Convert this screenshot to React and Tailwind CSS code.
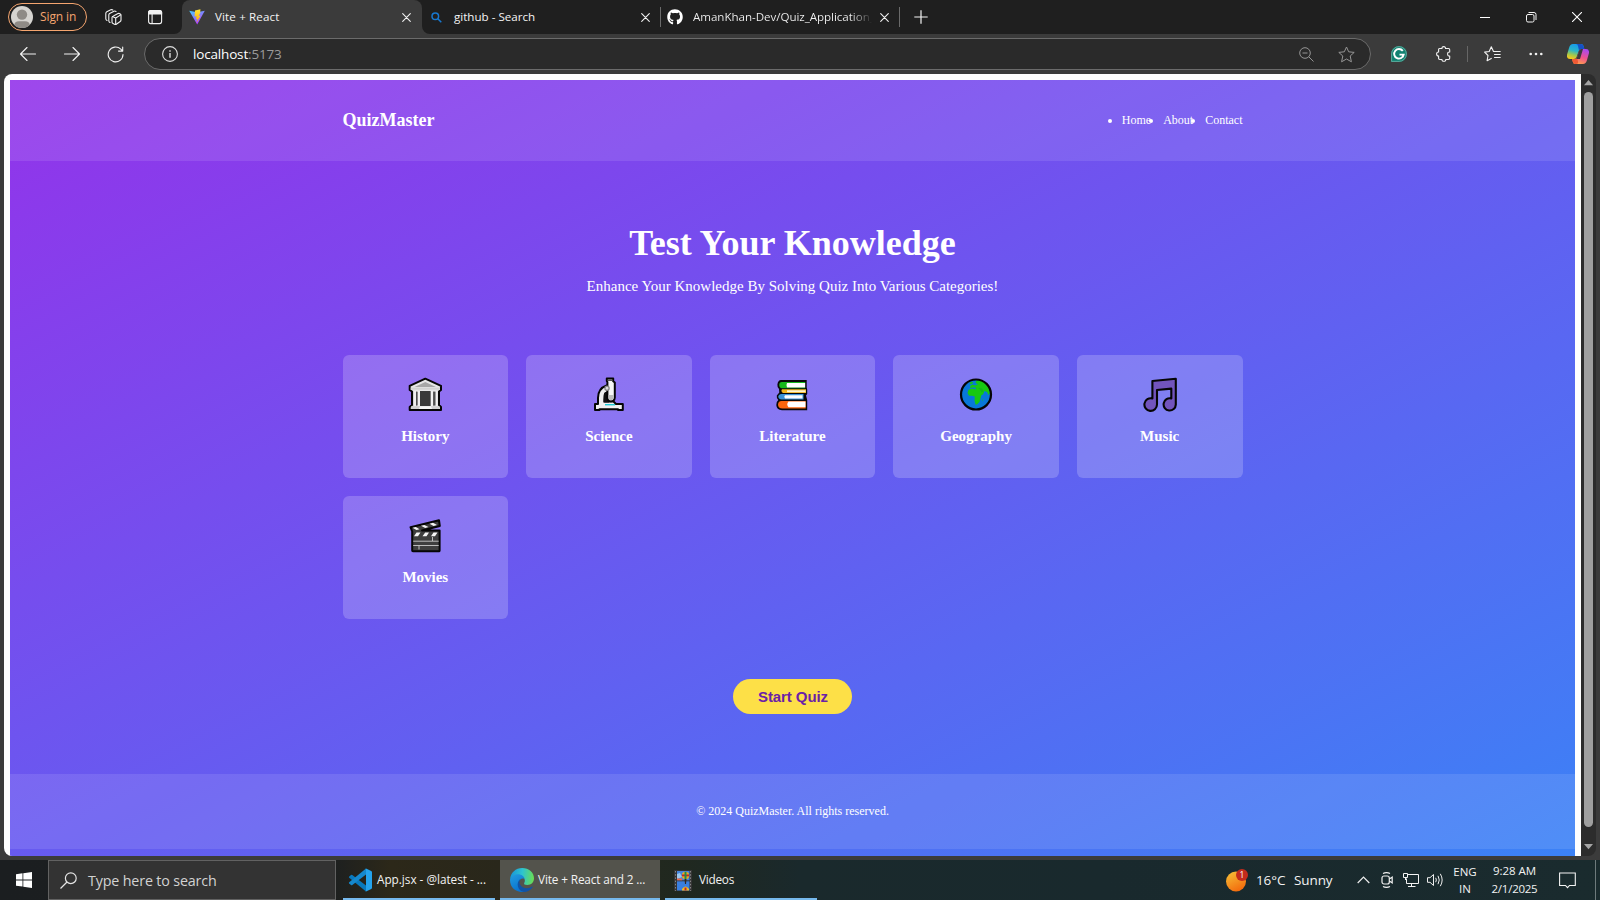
import React from "react";
import { FaGithub } from "react-icons/fa";

const ICON = { fill: "none", stroke: "#f2f2f2", strokeWidth: 1.1, strokeLinecap: "round", strokeLinejoin: "round" };

function CloseX({ className = "" }) {
  return (
    <svg width="9" height="9" viewBox="0 0 9 9" className={"shrink-0 " + className} {...ICON}>
      <path d="M.7 .7 8.3 8.3M8.3 .7 .7 8.3" />
    </svg>
  );
}

function ViteLogo() {
  return (
    <svg width="16" height="16" viewBox="0 0 16 16" className="ml-[7px] shrink-0">
      <defs>
        <linearGradient id="va" x1="0" y1="0" x2=".6" y2="1">
          <stop offset="0" stopColor="#41d1ff" />
          <stop offset="1" stopColor="#bd34fe" />
        </linearGradient>
        <linearGradient id="vb" x1="0" y1="0" x2="0" y2="1">
          <stop offset="0" stopColor="#ffe83a" />
          <stop offset="1" stopColor="#ffa800" />
        </linearGradient>
      </defs>
      <path d="M.2 1.8 8 3.2 15.8 1.8 8.2 15.6Z" fill="url(#va)" />
      <path d="M11.4.3 6 1.4 5.6 7.6 7.6 7.2 7 10.2 8.4 9.8 7.6 13.4 11.6 6.6 9.6 7 11.2 4Z" fill="url(#vb)" />
    </svg>
  );
}

function TabStrip() {
  return (
    <div className="flex h-[34px] shrink-0 items-center bg-[#1f1f1f] text-[11.6px] text-[#f3f3f3]">
      <div className="ml-2 flex h-[28px] w-[79px] shrink-0 items-center rounded-full border border-[#f5a56f] pl-[2px]">
        <svg width="22" height="22" viewBox="0 0 22 22" className="shrink-0">
          <defs><clipPath id="av"><circle cx="11" cy="11" r="11" /></clipPath></defs>
          <g clipPath="url(#av)">
            <rect width="22" height="22" fill="#d6d4d0" />
            <circle cx="11" cy="8.6" r="5.2" fill="#8f8b86" />
            <path d="M3 22v-2.5Q3.500 15.200 8 15.200H14Q18.500 15.200 19 19.500V22Z" fill="#8f8b86" />
          </g>
        </svg>
        <span className="ml-[7px] whitespace-nowrap text-[12px] tracking-[-0.1px] text-[#f5a56f]">Sign in</span>
      </div>
      <svg width="17" height="17" viewBox="0 0 17 17" className="ml-[18px] shrink-0" {...ICON}>
        <path d="M9.300 6.600 13 4.600Q14 4.200 14.800 4.700L15.500 5.200Q16 5.700 16 6.500V11Q16 12 15.200 12.500L11.300 15.200Q10.500 15.800 9.500 15.300L8 14.500Q7 14 7 13V8.500Q7 7.500 8 7.200Z" />
        <path d="M7.500 7.500 10.700 9V15.300M10.700 9 15.700 5.900M5 13.500 4.300 13Q3.800 12.500 3.800 11.500V6Q3.800 5 4.600 4.500L9 2.200Q10 1.800 11 2.500M2 11.500Q.8 11 .8 9.800V4.500Q.8 3.300 1.800 2.800L5.800.800Q6.800.400 7.800.900" />
      </svg>
      <svg width="16" height="16" viewBox="0 0 16 16" className="ml-[25px] shrink-0" {...ICON}>
        <rect x="1.600" y="1.600" width="13" height="13" rx="2" />
        <path d="M1.600 3.600Q1.600 1.600 3.600 1.600H12.600Q14.600 1.600 14.600 3.600V5H1.600Z" fill="#f2f2f2" />
        <path d="M5.100 5V14.500" />
      </svg>
      <div className="ml-[11px] h-2 w-2 shrink-0 self-end bg-[#3b3b3b]"><div className="h-2 w-2 rounded-br-lg bg-[#1f1f1f]" /></div>
      <div className="flex h-[34px] w-[240px] shrink-0 items-center rounded-t-lg bg-[#3b3b3b]">
        <ViteLogo />
        <span className="ml-[10px] w-[187px] whitespace-nowrap tracking-[0.13px]">Vite + React</span>
        <CloseX />
      </div>
      <div className="h-2 w-2 shrink-0 self-end bg-[#3b3b3b]"><div className="h-2 w-2 rounded-bl-lg bg-[#1f1f1f]" /></div>
      <svg width="11" height="11" viewBox="0 0 11 11" className="ml-[1px] shrink-0" fill="none" stroke="#1778d0" strokeWidth="1.500">
        <circle cx="4.300" cy="4.300" r="3.300" /><path d="M6.800 6.800 10.300 10.300" />
      </svg>
      <span className="ml-[12px] w-[187px] shrink-0 whitespace-nowrap">github - Search</span>
      <CloseX />
      <div className="ml-[10px] h-5 w-px shrink-0 bg-[#6a6a6a]" />
      <FaGithub size={16} color="#fff" className="ml-[6px] shrink-0" />
      <span className="ml-[10px] w-[181px] shrink-0 whitespace-nowrap bg-[linear-gradient(to_right,#f3f3f3_87%,#1f1f1f_99%)] bg-clip-text tracking-[-0.05px] text-transparent">AmanKhan-Dev/Quiz_Application_</span>
      <CloseX className="ml-[6px]" />
      <div className="ml-[10px] h-5 w-px shrink-0 bg-[#6a6a6a]" />
      <svg width="14" height="14" viewBox="0 0 14 14" className="ml-[14px] shrink-0" fill="none" stroke="#f5f5f5" strokeWidth="1.200"><path d="M7 .3V13.700M.3 7H13.700" /></svg>
      <svg width="10" height="10" viewBox="0 0 10 10" className="ml-auto shrink-0" fill="none" stroke="#fff"><path d="M0 5.500H10" /></svg>
      <svg width="10" height="10" viewBox="0 0 10 10" className="ml-[36px] shrink-0 overflow-visible" fill="none" stroke="#f5f5f5">
        <rect x=".5" y="2.500" width="7.500" height="7.500" rx="1.500" /><path d="M2.500.5H8Q10 .5 10 2.500V8" />
      </svg>
      <svg width="10" height="10" viewBox="0 0 10 10" className="ml-[36px] mr-[18px] shrink-0" fill="none" stroke="#fff" strokeWidth="1.100"><path d="M0 0 10 10M10 0 0 10" /></svg>
    </div>
  );
}

function Toolbar() {
  return (
    <div className="flex h-10 shrink-0 items-center bg-[#3b3b3b]">
      <svg width="16" height="14" viewBox="0 0 16 14" className="ml-[20px] shrink-0" {...ICON}><path d="M.5 7H15.500M7 .500.500 7 7 13.500" /></svg>
      <svg width="16" height="14" viewBox="0 0 16 14" className="ml-[28px] shrink-0" {...ICON}><path d="M.5 7H15.500M9 .5 15.500 7 9 13.500" /></svg>
      <svg width="17" height="17" viewBox="0 0 17 17" className="ml-[27px] shrink-0" {...ICON}><path d="M16 8.500A7.400 7.400 0 1 1 13.800 3.200L15.700 5.100M15.700 1V5.100H11.500" /></svg>
      <div className="ml-[20px] flex h-[32px] w-[1227px] shrink-0 items-center rounded-full border border-[#6b6b6b] bg-[#2a2a2a]">
        <svg width="16" height="16" viewBox="0 0 16 16" className="ml-[17px] shrink-0" fill="none" stroke="#dedede" strokeWidth="1.100"><circle cx="8" cy="8" r="7.400" /><path d="M8 7V11.700" strokeWidth="1.400" /><path d="M8 4.300V5.700" strokeWidth="1.400" /></svg>
        <span className="ml-[15px] whitespace-nowrap text-[13.500px] tracking-[-0.17px] text-white">localhost<span className="text-[#9a9a9a]">:5173</span></span>
        <svg width="15" height="15" viewBox="0 0 15 15" className="ml-auto shrink-0" fill="none" stroke="#959595"><circle cx="6" cy="6" r="5.300" /><path d="M9.800 9.800 14.500 14.500M3.500 6H8.500" /></svg>
        <svg width="17" height="17" viewBox="0 0 17 17" className="ml-[24px] mr-[15px] shrink-0" fill="none" stroke="#959595" strokeLinejoin="round"><path d="M8.500 1 10.700 5.800 16.200 6.400 12.200 10 13.400 15.800 8.500 13 3.600 15.800 4.800 10 .8 6.400 6.300 5.800Z" /></svg>
      </div>
      <svg width="16" height="16" viewBox="0 0 16 16" className="ml-[20px] shrink-0" fill="none">
        <path d="M8 0A8 8 0 1 1 8 16H0V8A8 8 0 0 1 8 0Z" fill="#128271" />
        <path d="M.6 15.400V8A7.400 7.400 0 1 1 8 15.400Z" stroke="#7fb9ad" strokeWidth=".7" />
        <path d="M11.800 4.900A4.800 4.800 0 1 0 12.700 8.600H8.500M12.500 8.600 11.500 11.400" stroke="#fff" strokeWidth="1.900" />
      </svg>
      <svg width="16" height="16" viewBox="0 0 16 16" className="ml-[29px] shrink-0" {...ICON}><path d="M3.500 2.500H6Q5.800.600 7.700.600T9.500 2.500H12.500Q13.700 2.500 13.700 3.700V6Q11.600 5.900 11.600 8T13.700 10V12.300Q13.700 13.500 12.500 13.500H9.700Q9.900 15.300 7.900 15.300T6 13.500H3.800Q2.600 13.500 2.600 12.300V10Q.6 10 .6 8T2.600 6V3.700Q2.600 2.500 3.500 2.500Z" /></svg>
      <div className="ml-[15px] h-4 w-px shrink-0 bg-[#666]" />
      <svg width="17" height="16" viewBox="0 0 17 16" className="ml-[16px] shrink-0" {...ICON}><path d="M9.500 5.500 7.300.800 5.200 5.500.600 6.100 4 9.500 3.100 14.700 7.300 12.400M10.500 8.500H16.200M10.500 11.500H16.200M9.500 5.500H16.200" /></svg>
      <svg width="14" height="4" viewBox="0 0 14 4" className="ml-[28px] shrink-0" fill="#f2f2f2"><circle cx="1.700" cy="2" r="1.300" /><circle cx="7" cy="2" r="1.300" /><circle cx="12.300" cy="2" r="1.300" /></svg>
      <svg width="22" height="20" viewBox="0 0 22 20" className="ml-[24px] shrink-0">
        <defs>
          <linearGradient id="cpa" x1=".6" y1="0" x2=".3" y2="1"><stop offset="0" stopColor="#1697ee" /><stop offset=".45" stopColor="#2ab6c9" /><stop offset=".75" stopColor="#a5c94b" /><stop offset="1" stopColor="#f8c81c" /></linearGradient>
          <linearGradient id="cpb" x1=".7" y1="0" x2=".3" y2="1"><stop offset="0" stopColor="#a948f0" /><stop offset=".5" stopColor="#ef5290" /><stop offset="1" stopColor="#ffa248" /></linearGradient>
        </defs>
        <path d="M6 0H14Q16 0 16.700 2.300L17.300 5H14Q12.300 5 11.700 7L9.600 13Q8.800 15 7 15H3Q-.5 15-.1 11L2 4Q3 .2 6 0Z" fill="url(#cpa)" />
        <path d="M13.500 0Q16 0 16.700 2.300L17.300 5H14Q12.500 5 12 6.500L11 2Q10.700.200 9 0Z" fill="#164fc4" />
        <path d="M16 20H8.300Q6.300 20 5.700 17.500L5 15H8Q9.500 15 10.200 13L12.200 7Q12.800 5 14.500 5H19Q22.400 5 22 9L20 16Q19 19.800 16 20Z" fill="url(#cpb)" />
        <path d="M5 15H8Q9.400 15 10 13.400L11 17.500Q11.500 20 9 20H8.300Q6.300 20 5.700 17.500Z" fill="#f05a35" />
        <path d="M12.300 6.500Q12.800 5 14.500 5H16L13 15H9Q9.800 14.300 10.200 13Z" fill="#3b3b3b" />
      </svg>
    </div>
  );
}

function Museum() {
  return (
    <svg width="36" height="36" viewBox="0 0 36 36" stroke="#050505" strokeWidth="2" strokeLinejoin="round">
      <path d="M18.300 2.700 34 9.800V14L32 15.500V29L34 31V34H2.700V31L5 29V15.500L2.700 14V9.800Z" fill="#e6e6e6" />
      <g stroke="none">
        <path d="M7.500 11 18.300 6 29 11Z" fill="#a7a7a7" />
        <path d="M3.700 11.600H33V13.700H3.700Z" fill="#d2d2d2" />
        <path d="M6.500 15.300H30.500V30H6.500Z" fill="#8c8c8c" />
        <path d="M13 15H23.600V30H13Z" fill="#393939" />
        <path d="M6.500 15H9V30H6.500ZM10.500 15H13V30H10.500ZM23.800 15H26V30H23.800ZM28.500 15H30.800V30H28.500Z" fill="#f0f0f0" />
        <path d="M9 16H10.500V29H9ZM26.200 16H28.300V29H26.200Z" fill="#505050" />
        <path d="M4 30.200H32.700V33H4Z" fill="#d0d0d0" /><path d="M13 30.200H24L25 33H12Z" fill="#f5f5f5" />
      </g>
    </svg>
  );
}

function Microscope() {
  return (
    <svg width="36" height="36" viewBox="0 0 36 36" stroke="#050505" strokeWidth="2" strokeLinejoin="round">
      <path d="M15.600 9.500Q7 12.500 7 22V28H4V34H8.500V33.300H27V34H31.800V28H25L22.500 25.500H13.700V19Q14 17 17 16Z" fill="#f0f0f0" />
      <path d="M13.700 16.500H18V26.500H12.300Q12.400 19 13.700 16.500Z" fill="#111" stroke="none" />
      <path d="M15.800 2.500H22.200V5.200L23.800 6.500V21.500Q23.500 25.300 19.800 25.300 16.500 25.300 16.400 21.500V6L15.800 5Z" fill="#f5f5f5" />
      <path d="M17.400 19H22.800V21Q22.300 24.300 19.700 24.300 17.400 24.300 17.400 22Z" fill="#bdbdbd" stroke="none" />
      <path d="M16.800 3.400H21.300V5H16.800Z" fill="#505050" stroke="none" />
      <circle cx="16" cy="12.200" r="2.100" fill="#ddd" stroke="#858585" strokeWidth="1.300" />
      <path d="M14 28H24V29.400H14Z" fill="#20cad6" stroke="none" />
    </svg>
  );
}

function Books() {
  return (
    <svg width="36" height="36" viewBox="0 0 36 36">
      <path d="M7 4H32.700V11.500L33.200 13.500V18L32 19.500L33.200 24V34.200H8Q2.500 33.700 2.300 29 2.300 25.500 4.300 24 2.300 22 2.800 19.500L5.300 16.500 5 13Q3.100 11.500 3.400 8.500 4 4 7 4Z" fill="#080808" />
      <path d="M8 6H31.200V7H13V11.300H31.200V12.300H8Q5.200 12 5.200 9.100T8 6Z" fill="#16b81b" /><path d="M13 7H31.200V11.400H13Q12 9 13 7Z" fill="#fff" />
      <path d="M8 13.300H32V17H9Q6.500 15.500 8 13.300Z" fill="#f3b51b" /><path d="M13 14.300H31.500V16.200H13Z" fill="#fff5d2" />
      <path d="M7.500 17.900H29.500V23.400H7.500Q4.300 23 4.300 20.700T7.500 17.900Z" fill="#3a91d6" /><path d="M11 19.200H28.500V22.400H11Q9.500 20.800 11 19.200Z" fill="#fff" />
      <path d="M7.500 24.900H31.700V32.500H8.500Q4 32.200 4 28.700 4 25.200 7.500 24.900Z" fill="#fb650c" /><path d="M14.500 25.600H31.500V31.200H14.500Q12 28.500 14.500 25.600Z" fill="#fff" />
    </svg>
  );
}

function Globe() {
  return (
    <svg width="36" height="36" viewBox="0 0 36 36">
      <circle cx="18" cy="18.500" r="15" fill="#0878d8" />
      <path d="M18 5 22 3.800Q29 6 31.500 13L32 17 30.300 19 29 16 26.500 15 25 18.500 23.500 19 21.500 26 19 28.500H17.500L16.500 24.500 16.800 20.500 14 19.700H11L9.500 17 10.500 13.800 14 12.500 18 13.500 17.500 11.500 14.500 11.500 12 12.300 12.500 9.500 14.500 8.500 17 9.500 20 8.300 17.500 7Z" fill="#17c810" />
      <path d="M11.500 6.800 14.500 5.500 15 7 12.500 8.500ZM24 24 25 22.500 24.500 25.200Z" fill="#17c810" />
      <path d="M20 11.800 24 12.500 25.500 15.200 23.800 16.500 22 13.700Z" fill="#12b718" />
      <circle cx="18" cy="18.500" r="15" fill="none" stroke="#050505" strokeWidth="2.200" />
    </svg>
  );
}

function Music() {
  return (
    <svg width="36" height="36" viewBox="0 0 36 36">
      <path d="M10.400 5 33.800 2.800V28.600A6.100 6.100 0 1 1 29.300 22.500V12.600L15 14V28.600A6.300 6.300 0 1 1 10.400 22.500Z" fill="#7254bd" stroke="#050505" strokeWidth="2.100" strokeLinejoin="round" />
    </svg>
  );
}

function Clapper() {
  return (
    <svg width="36" height="36" viewBox="0 0 36 36">
      <path d="M3.500 10.200 32 3.200 32.800 9 15 13.500H32.600V33.500Q32.500 34.200 32 34.200H6Q5.200 34.200 5.200 33.500V14.500Z" fill="#3e3e3e" stroke="#050505" strokeWidth="2" strokeLinejoin="round" />
      <path d="M5.500 10.800 8.800 10 12.500 12.200 9.500 13ZM14 8.700 17.300 7.900 21.500 10.100 18.200 10.900ZM22.500 6.700 26 5.800 30 8 26.600 8.900ZM9.500 15.500H13.500L11 19.300H7ZM18.200 15.500H22L19.500 19.300H15.500ZM26.500 15.500H30.500L28 19.300H24Z" fill="#f5f5f5" />
      <path d="M6.200 24.200H31.700M6.200 28.500H31.700M12 28.500V32.500M25.500 20V24" fill="none" stroke="#c9c9c9" strokeWidth=".9" />
    </svg>
  );
}

const categories = [
  ["History", Museum],
  ["Science", Microscope],
  ["Literature", Books],
  ["Geography", Globe],
  ["Music", Music],
  ["Movies", Clapper],
];

function QuizPage() {
  return (
    <div className="w-[1577px] shrink-0 overflow-hidden rounded-l-lg bg-white pl-[6px] pr-[6px] pt-[6px]">
      <div className="flex h-[784px] flex-col bg-[linear-gradient(to_bottom_right,#9333ea,#3b82f6)] font-['Liberation_Serif',serif] text-white">
        <header className="flex h-[81px] shrink-0 items-center justify-center bg-white/10">
          <div className="flex w-[900px] items-center justify-between">
            <div className="text-[18px] font-bold">QuizMaster</div>
            <ul className="flex list-disc gap-3 pb-[2px] text-[12px] leading-[14px]">
              <li>Home</li><li>About</li><li>Contact</li>
            </ul>
          </div>
        </header>
        <main className="flex h-[613px] shrink-0 flex-col items-center">
          <h1 className="mt-[61px] text-[36px] font-bold leading-[42px]">Test Your Knowledge</h1>
          <p className="mt-[13px] text-[15px] leading-[18px]">Enhance Your Knowledge By Solving Quiz Into Various Categories!</p>
          <div className="mt-[60px] grid w-[900px] grid-cols-5 gap-[18px]">
            {categories.map(([name, Glyph]) => (
              <div key={name} className="flex h-[123px] flex-col items-center rounded-[6px] bg-white/20 pt-[21px]">
                <Glyph />
                <h3 className="mt-[14px] text-[15px] font-bold leading-5">{name}</h3>
              </div>
            ))}
          </div>
          <button className="mt-[60px] h-[35px] w-[119px] rounded-full bg-[#fde047] pl-px pt-[2px] font-['Liberation_Sans',sans-serif] text-[15px] font-bold tracking-[-0.08px] text-[#6b21a8]">Start Quiz</button>
        </main>
        <footer className="flex h-[75px] shrink-0 items-center justify-center bg-white/10 pb-[2px] text-[12px]">© 2024 QuizMaster. All rights reserved.</footer>
      </div>
    </div>
  );
}

function Scrollbar() {
  return (
    <div className="flex w-[15px] flex-col items-center rounded-r-lg bg-[#2c2c2c]">
      <svg width="9" height="6" viewBox="0 0 9 6" className="mt-[6px] shrink-0" fill="#a5a5a5"><path d="M4.500 0 9 5.300H0Z" /></svg>
      <div className="mt-[6px] h-[735px] w-[9px] shrink-0 rounded-full bg-[#9f9f9f]" />
      <svg width="9" height="6" viewBox="0 0 9 6" className="mt-[17px] shrink-0" fill="#a5a5a5"><path d="M4.500 5.300 0 0H9Z" /></svg>
    </div>
  );
}

function EdgeLogo() {
  return (
    <svg width="24" height="24" viewBox="0 0 24 24" className="ml-[10px] shrink-0">
      <defs>
        <linearGradient id="ea" x1="0" y1=".3" x2="1" y2=".4"><stop offset="0" stopColor="#1793d8" /><stop offset=".5" stopColor="#2dc3d0" /><stop offset="1" stopColor="#68dd55" /></linearGradient>
        <linearGradient id="eb" x1="0" y1="0" x2=".5" y2="1"><stop offset="0" stopColor="#239ddf" /><stop offset="1" stopColor="#0872cf" /></linearGradient>
      </defs>
      <path d="M0 11.500C.5 4.500 5.800 0 12.200 0 19 0 24 4.700 24 10.300 24 14.500 21 17 17.300 17 14.700 17 13.500 16 14.300 14.700 16.500 11.200 12.500 7.500 8 7.500 4 7.500 1.300 9.200 0 11.500Z" fill="url(#ea)" />
      <path d="M0 11.500C1.400 8 4.500 6.200 8.100 6.200 11.500 6.200 14.500 8.500 14.700 11 12 9.500 9 11.500 8.500 15 8 19 11 23 15.500 23.500 7.500 25.500 0 20.500 0 12Z" fill="url(#eb)" />
      <path d="M10.600 10.800C7.600 14.700 11 20.300 16.500 20.300 19 20.300 20.800 19.500 22 18.600 22.600 18.200 23 18.700 22.600 19.300 20.500 22.300 17.500 24 14 24 7.300 23 5.500 14.500 10.600 10.800Z" fill="#1153a5" />
    </svg>
  );
}

function VideosIcon() {
  return (
    <svg width="18" height="21" viewBox="0 0 18 21" className="ml-[9px] shrink-0">
      <rect width="18" height="21" fill="#343434" />
      <path d="M1.500 1V21M16.500 1V21" stroke="#858585" strokeWidth="1" strokeDasharray="1.500 1.700" />
      <rect x="3" y="1" width="12.500" height="9.300" fill="#4385df" /><rect x="3" y="11.300" width="12.500" height="9.200" fill="#397fe0" />
      <path d="M3 4 6 3 8 7 3 9Z" fill="#9cc8ef" /><path d="M3 8.500H8V10.300H3Z" fill="#ed6746" />
      <circle cx="11.500" cy="5.500" r="3.700" fill="#e9ad20" /><path d="M8 4.500H15V6.300H8Z" fill="#b82835" /><path d="M10.500 1.800H12.500V9H10.500Z" fill="#208a4d" />
      <path d="M10.500 9H12.500L12 14H11Z" fill="#33261f" />
      <path d="M8 19Q11.500 14 15 19V20.500H8Z" fill="#efba22" /><path d="M10.500 17.500H12.500V20.500H10.500Z" fill="#b82835" />
    </svg>
  );
}

function Taskbar() {
  return (
    <div className="flex h-10 shrink-0 bg-[linear-gradient(to_right,#1b1e20_0,#1c1f20_330px,#2c2819_390px,#29271b_500px,#20281f_680px,#1a292c_800px,#19292d_1100px,#1a2b2e_1600px)] text-[11.800px] text-[#f2f2f2]">
      <div className="flex w-12 shrink-0 items-center justify-center">
        <svg width="16" height="16" viewBox="0 0 16 16" fill="#fff"><path d="M0 2.200 6.500 1.300V7.500H0ZM7.300 1.200 16 0V7.500H7.300ZM0 8.400H6.500V14.600L0 13.700ZM7.300 8.400H16V16L7.300 14.800Z" /></svg>
      </div>
      <div className="flex w-[288px] shrink-0 items-center border border-[#626262] bg-[#333]">
        <svg width="17" height="17" viewBox="0 0 17 17" className="ml-[11px] shrink-0" fill="none" stroke="#e5e5e5" strokeWidth="1.200"><circle cx="10.800" cy="6.200" r="5.400" /><path d="M7 10 .5 16.500" /></svg>
        <span className="ml-[11px] whitespace-nowrap pt-px text-[14.300px] tracking-[-0.16px] text-[#d2d2d2]">Type here to search</span>
      </div>
      <div className="ml-[7px] flex w-[152px] shrink-0 items-center border-b-2 border-[#76b9ed]">
        <svg width="24" height="24" viewBox="0 0 24 24" className="ml-[5px] mt-[2px] shrink-0">
          <path d="M1.200 8.500 3 6.900Q3.600 6.500 4.300 7L18 17.600V23.500L1.200 9.800Q.6 9.200 1.200 8.500Z" fill="#0879be" />
          <path d="M1.200 15.500 3 17.100Q3.600 17.500 4.300 17L18 6.400V.500L1.200 14.200Q.6 14.800 1.200 15.500Z" fill="#1588cd" />
          <path d="M17.500.200 23.200 2.900Q24 3.300 24 4.200V19.800Q24 20.700 23.200 21.100L17.500 23.800Q18 23.500 18 22.500V1.500Q18 .5 17.500.200Z" fill="#24a3ed" />
        </svg>
        <span className="ml-[5px] whitespace-nowrap pt-[2px] tracking-[-0.03px]">App.jsx - @latest - ...</span>
      </div>
      <div className="ml-[5px] flex w-[160px] shrink-0 items-center border-b-2 border-[#76b9ed] bg-[#53534c]">
        <div className="pt-[2px]"><EdgeLogo /></div><span className="ml-[4px] whitespace-nowrap pt-[2px] tracking-[-0.14px]">Vite + React and 2 ...</span>
      </div>
      <div className="ml-[5px] flex w-[152px] shrink-0 items-center border-b-2 border-[#76b9ed]">
        <div className="pt-[2px]"><VideosIcon /></div><span className="ml-[7px] pt-[2px] tracking-[-0.25px]">Videos</span>
      </div>
      <div className="ml-auto flex items-center">
        <svg width="22" height="23" viewBox="0 0 22 23" className="shrink-0">
          <defs><linearGradient id="sun" x1=".2" y1="0" x2=".7" y2="1"><stop offset="0" stopColor="#f6bd35" /><stop offset="1" stopColor="#f3670b" /></linearGradient></defs>
          <circle cx="10" cy="12.500" r="10" fill="url(#sun)" /><circle cx="16" cy="6" r="6" fill="#c42b1c" />
          <text x="16" y="9" textAnchor="middle" fontSize="8.500" fill="#fff">1</text>
        </svg>
        <span className="ml-[8px] w-[38px] whitespace-nowrap text-[13.500px] tracking-[-0.1px]">16°C</span>
        <span className="w-[63px] text-[13.500px] tracking-[-0.1px]">Sunny</span>
        <svg width="13" height="8" viewBox="0 0 13 8" className="shrink-0" fill="none" stroke="#eee" strokeWidth="1.200"><path d="M.7 7 6.500 1.200 12.300 7" /></svg>
        <svg width="12" height="16" viewBox="0 0 12 16" className="ml-[11px] shrink-0" fill="none" stroke="#eee" strokeWidth="1.200"><rect x="1" y="4" width="7.300" height="8" rx="2" /><path d="M8.300 7 11.200 5.200V10.800L8.300 9M2 1.500Q5.500-.3 9 1.500M2 14.500Q5.500 16.300 9 14.500" /></svg>
        <svg width="16" height="16" viewBox="0 0 16 16" className="ml-[10px] shrink-0" fill="none" stroke="#f3f3f3"><path d="M5 2.500H15.500V11.500H3.500V6.500M8.500 11.500V14.500M5 14.500H12.500M.5 1.500H4.500V5.500H.5ZM2.500 5.500V8" /></svg>
        <svg width="17" height="14" viewBox="0 0 17 14" className="ml-[8px] shrink-0" fill="none" stroke="#eee"><path d="M.5 4.700H3L6.500 1.500V12.500L3 9.300H.5ZM8.700 4.800Q10 7 8.700 9.200M11 2.800Q13.500 7 11 11.200M13.300.8Q17 7 13.300 13.200" /></svg>
        <div className="ml-[5px] w-[32px] text-center text-[11.500px] leading-[17px]">ENG<br />IN</div>
        <div className="ml-[4px] w-[59px] whitespace-nowrap text-center text-[11.500px] leading-[18px]"><div className="tracking-[-0.05px]">9:28 AM</div><div className="tracking-[-0.25px]">2/1/2025</div></div>
        <svg width="17" height="17" viewBox="0 0 17 17" className="ml-[15px] mr-[19px] shrink-0" fill="none" stroke="#f3f3f3" strokeWidth="1.100"><path d="M.6 1H16.300V13.500H10.500L8.500 15.700 6.500 13.500H.6Z" /></svg>
        <div className="mr-1 h-10 w-px bg-[#6e7a7c]" />
      </div>
    </div>
  );
}

export default function App() {
  return (
    <div className="flex h-[900px] w-[1600px] flex-col overflow-hidden bg-[#3b3b3b] font-['Open_Sans','Noto_Sans',sans-serif]">
      <TabStrip />
      <Toolbar />
      <div className="flex h-[782px] shrink-0 pl-[4px]">
        <QuizPage />
        <Scrollbar />
      </div>
      <div className="h-1 shrink-0" />
      <Taskbar />
    </div>
  );
}
